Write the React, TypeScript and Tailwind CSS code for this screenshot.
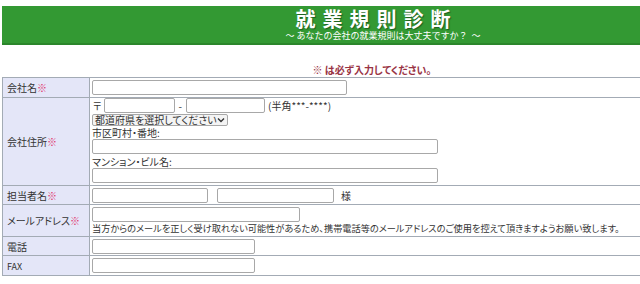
import React from 'react';

const jp = "font-['Meiryo','Noto_Sans_CJK_JP',sans-serif]";

const Req: React.FC = () => <span className="text-[#e0306a]">※</span>;

const Input: React.FC<{ w: string }> = ({ w }) => (
  <input
    type="text"
    className={`${w} h-[15px] border border-[#a8a8a8] rounded-[2px] bg-white outline-none`}
  />
);

const Label: React.FC<{ children: React.ReactNode }> = ({ children }) => (
  <td className="bg-[#e4e6f8] border border-[#a3abb5] px-[4px] align-middle text-[10px] text-[#333] whitespace-nowrap">
    {children}
  </td>
);

const Cell: React.FC<{ children: React.ReactNode }> = ({ children }) => (
  <td className="border border-[#a3abb5] pl-[2px] align-middle text-[10px] text-[#333]">{children}</td>
);

const App: React.FC = () => {
  return (
    <div className={`w-[640px] h-[284px] overflow-hidden bg-white ${jp} [font-feature-settings:'palt']`}>
      {/* Header */}
      <div className="mt-[6px] ml-[2px] h-[39px] bg-[#339933] border-b-2 border-[#2b862b] flex flex-col items-center pl-[104px]">
        <div className="mt-[3px] h-[20px] leading-[20px] text-[20px] font-bold text-white tracking-[7px] pl-[7px] [text-shadow:1px_1px_1px_#1f5f1f]">
          就業規則診断
        </div>
        <div className="pl-[20px] mt-[2px] text-[9px] leading-[10px] text-white whitespace-pre [font-feature-settings:normal]">
          {'～ あなたの会社の就業規則は大丈夫ですか？  ～'}
        </div>
      </div>

      {/* Notice */}
      <div className="mt-[18px] h-[14px] pl-[104px] text-center text-[10px] leading-[14px] font-bold text-[#993344]">
        ※ は必ず入力してください。
      </div>

      {/* Form table */}
      <table className="ml-[2px] w-[660px] table-fixed border-collapse">
        <colgroup>
          <col className="w-[87px]" />
          <col />
        </colgroup>
        <tbody>
          <tr className="h-[20px]">
            <Label>
              会社名<Req />
            </Label>
            <Cell>
              <div className="flex items-center">
                <Input w="w-[255px]" />
              </div>
            </Cell>
          </tr>
          <tr className="h-[86px]">
            <Label>
              会社住所<Req />
            </Label>
            <Cell>
              <div className="flex flex-col pb-[2px]">
                <div className="flex items-center h-[15px] leading-[15px]">
                  <span className="ml-[1px] mr-[2px]">〒</span>
                  <Input w="w-[71px]" />
                  <span className="mx-[4px]">-</span>
                  <Input w="w-[79px]" />
                  <span className="ml-[3px]">(半角***-****)</span>
                </div>
                <div className="h-[12px] mt-[1px] flex items-center">
                  <div className="h-[12px] w-[136px] border border-[#a8a8a8] rounded-[2px] bg-[#f4f4f4] flex items-center justify-between px-[2px] text-[10px] leading-[10px]">
                    <span>都道府県を選択してください</span>
                    <svg width="8" height="6" viewBox="0 0 8 6" className="shrink-0">
                      <path d="M1 1.5 L4 4.5 L7 1.5" fill="none" stroke="#333" strokeWidth="1.4" />
                    </svg>
                  </div>
                </div>
                <div className="h-[12px] leading-[12px] mt-[1px]">市区町村・番地:</div>
                <Input w="w-[346px]" />
                <div className="h-[13px] leading-[13px] mt-[1px]">マンション・ビル名:</div>
                <Input w="w-[346px]" />
              </div>
            </Cell>
          </tr>
          <tr className="h-[19px]">
            <Label>
              担当者名<Req />
            </Label>
            <Cell>
              <div className="flex items-center">
                <Input w="w-[116px]" />
                <span className="w-[9px]" />
                <Input w="w-[117px]" />
                <span className="ml-[7px]">様</span>
              </div>
            </Cell>
          </tr>
          <tr className="h-[32px]">
            <Label>
              メールアドレス<Req />
            </Label>
            <Cell>
              <div className="flex flex-col">
                <Input w="w-[208px]" />
                <div className="h-[12px] leading-[12px] whitespace-nowrap text-[9.2px]">
                  当方からのメールを正しく受け取れない可能性があるため、携帯電話等のメールアドレスのご使用を控えて頂きますようお願い致します。
                </div>
              </div>
            </Cell>
          </tr>
          <tr className="h-[19px]">
            <Label>電話</Label>
            <Cell>
              <div className="flex items-center">
                <Input w="w-[163px]" />
              </div>
            </Cell>
          </tr>
          <tr className="h-[20px]">
            <Label>
              <span className="text-[9px]">FAX</span>
            </Label>
            <Cell>
              <div className="flex items-center">
                <Input w="w-[163px]" />
              </div>
            </Cell>
          </tr>
        </tbody>
      </table>
    </div>
  );
};

export default App;
